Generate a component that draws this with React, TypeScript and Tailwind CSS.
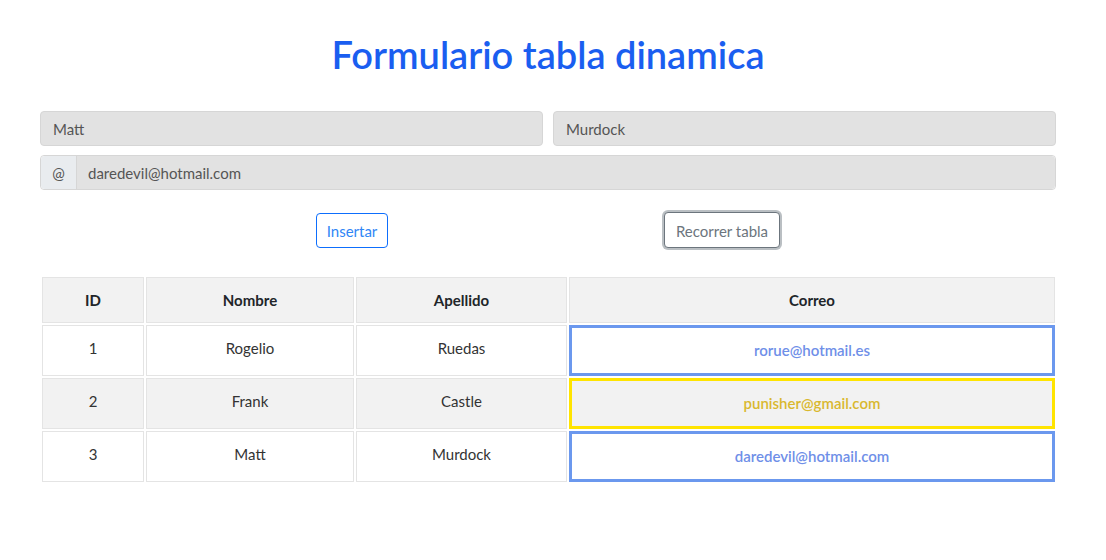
import React from "react";

const rows = [
  { id: 1, nombre: "Rogelio", apellido: "Ruedas", correo: "rorue@hotmail.es", color: "blue" },
  { id: 2, nombre: "Frank", apellido: "Castle", correo: "punisher@gmail.com", color: "yellow" },
  { id: 3, nombre: "Matt", apellido: "Murdock", correo: "daredevil@hotmail.com", color: "blue" },
];

export default function App() {
  return (
    <div className="min-h-[560px] bg-white text-[#212529]" style={{ fontFamily: "Lato, 'Noto Sans', sans-serif" }}>
      <div className="pl-[40px] pr-[50px] pt-[33px]">
        <h1 className="text-center text-[38px] font-semibold leading-[43px] text-[#1a5ef0]">Formulario tabla dinamica</h1>
        <div className="mt-[35px] flex gap-[10px]">
          <div className="flex h-[35px] flex-1 items-center rounded-[4px] border border-[#d6d6d6] bg-[#e2e2e2] px-[12px] pt-[2px] text-[15px] text-[#555]">Matt</div>
          <div className="flex h-[35px] flex-1 items-center rounded-[4px] border border-[#d6d6d6] bg-[#e2e2e2] px-[12px] pt-[2px] text-[15px] text-[#555]">Murdock</div>
        </div>
        <div className="mt-[9px] flex h-[35px] rounded-[4px] border border-[#d6d6d6] text-[15px] text-[#555]">
          <div className="flex w-[36px] items-center justify-center rounded-l-[4px] border-r border-[#d6d6d6] bg-[#e9ecef] pt-[1px]">@</div>
          <div className="flex flex-1 items-center rounded-r-[4px] bg-[#e2e2e2] px-[11px] pt-[2px]">daredevil@hotmail.com</div>
        </div>
        <div className="mt-[22px] flex items-center justify-evenly">
          <button className="h-[35px] w-[72px] rounded-[4px] border border-[#0d6efd] bg-white pt-[2px] text-[15px] text-[#2f86f6]">Insertar</button>
          <button className="h-[36px] w-[116px] rounded-[4px] border border-[#6c757d] bg-white pt-[2px] text-[15px] text-[#6c757d] shadow-[0_0_0_2px_rgba(130,138,145,0.55)]">Recorrer tabla</button>
        </div>
        <table className="mt-[27px] w-[1017px] border-separate border-spacing-[2px] text-center text-[15px]">
          <thead>
            <tr>
              <th className="h-[46px] w-[102px] border border-[#e4e4e4] bg-[#f2f2f2] font-bold">ID</th>
              <th className="h-[46px] w-[208px] border border-[#e4e4e4] bg-[#f2f2f2] font-bold">Nombre</th>
              <th className="h-[46px] w-[211px] border border-[#e4e4e4] bg-[#f2f2f2] font-bold">Apellido</th>
              <th className="h-[46px] border border-[#e4e4e4] bg-[#f2f2f2] font-bold">Correo</th>
            </tr>
          </thead>
          <tbody>
            {rows.map((r, i) => {
              const bg = i % 2 === 1 ? "bg-[#f2f2f2]" : "bg-white";
              return (
                <tr key={r.id}>
                  <td className={`h-[51px] border border-[#e4e4e4] pb-[5px] text-[#333] ${bg}`}>{r.id}</td>
                  <td className={`h-[51px] border border-[#e4e4e4] pb-[5px] text-[#333] ${bg}`}>{r.nombre}</td>
                  <td className={`h-[51px] border border-[#e4e4e4] pb-[5px] text-[#333] ${bg}`}>{r.apellido}</td>
                  <td
                    className={
                      r.color === "blue"
                        ? `h-[51px] border-[3px] border-[#6b98ee] font-semibold text-[#6f8fe8] ${bg}`
                        : `h-[51px] border-[3px] border-[#ffe400] font-semibold text-[#d9b82e] ${bg}`
                    }
                  >
                    {r.correo}
                  </td>
                </tr>
              );
            })}
          </tbody>
        </table>
      </div>
    </div>
  );
}
